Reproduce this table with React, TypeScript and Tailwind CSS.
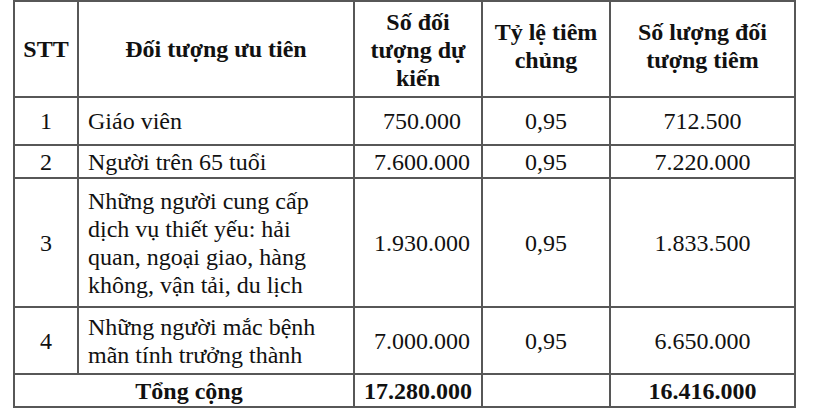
import React from "react";

interface Row {
  stt: string;
  label: React.ReactNode;
  planned: string;
  rate: string;
  total: string;
}

const rows: Row[] = [
  { stt: "1", label: "Giáo viên", planned: "750.000", rate: "0,95", total: "712.500" },
  { stt: "2", label: "Người trên 65 tuổi", planned: "7.600.000", rate: "0,95", total: "7.220.000" },
  {
    stt: "3",
    label: (
      <>
        Những người cung cấp
        <br />
        dịch vụ thiết yếu: hải
        <br />
        quan, ngoại giao, hàng
        <br />
        không, vận tải, du lịch
      </>
    ),
    planned: "1.930.000",
    rate: "0,95",
    total: "1.833.500",
  },
  {
    stt: "4",
    label: (
      <>
        Những người mắc bệnh
        <br />
        mãn tính trưởng thành
      </>
    ),
    planned: "7.000.000",
    rate: "0,95",
    total: "6.650.000",
  },
];

const heights = ["h-[48px]", "h-[33px]", "h-[129px]", "h-[67px]"];

const cell = "border-2 border-[#575757] p-0 align-middle";

export default function App() {
  return (
    <div className="min-h-screen w-[828px] h-[413px] bg-white pl-[13px] pt-0 overflow-hidden">
      <table
        className="table-fixed border-collapse text-[24px] leading-[28px] text-[#111]"
        style={{ fontFamily: '"Liberation Serif", "Times New Roman", serif' }}
      >
        <colgroup>
          <col className="w-[64px]" />
          <col className="w-[276px]" />
          <col className="w-[128px]" />
          <col className="w-[128px]" />
          <col className="w-[185px]" />
        </colgroup>
        <thead>
          <tr className="h-[96px] font-bold text-center">
            <th className={cell}>STT</th>
            <th className={cell}>Đối tượng ưu tiên</th>
            <th className={`${cell} pt-[2px]`}>
              Số đối
              <br />
              tượng dự
              <br />
              kiến
            </th>
            <th className={`${cell} pb-[6px]`}>
              Tỷ lệ tiêm
              <br />
              chủng
            </th>
            <th className={`${cell} pb-[6px]`}>
              Số lượng đối
              <br />
              tượng tiêm
            </th>
          </tr>
        </thead>
        <tbody>
          {rows.map((r, i) => (
            <tr key={r.stt} className={heights[i]}>
              <td className={`${cell} text-center`}>{r.stt}</td>
              <td className={`${cell} pl-[9px]`}>{r.label}</td>
              <td className={`${cell} text-center pl-[8px]`}>{r.planned}</td>
              <td className={`${cell} text-center`}>{r.rate}</td>
              <td className={`${cell} text-center`}>{r.total}</td>
            </tr>
          ))}
          <tr className="h-[33px] font-bold">
            <td colSpan={2} className={`${cell} text-center pl-[10px]`}>
              Tổng cộng
            </td>
            <td className={`${cell} text-center`}>17.280.000</td>
            <td className={cell}></td>
            <td className={`${cell} text-center`}>16.416.000</td>
          </tr>
        </tbody>
      </table>
    </div>
  );
}
